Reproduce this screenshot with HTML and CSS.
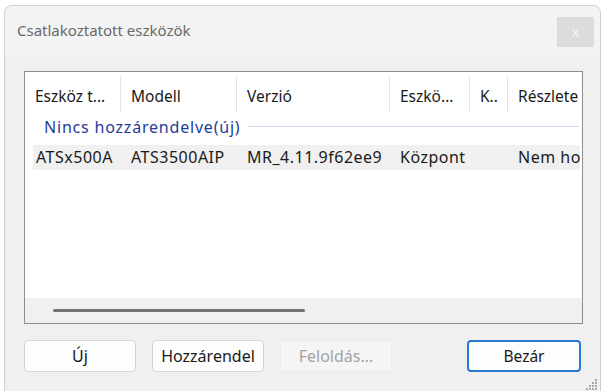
FILE: index.html
```
<!DOCTYPE html>
<html>
<head>
<meta charset="utf-8">
<link rel="stylesheet" href="styles.css">
</head>
<body>
<div class="window">
  <div class="titlebar">
    <div class="title">Csatlakoztatott eszközök</div>
    <div class="close">x</div>
  </div>
  <div class="content">
    <div class="list">
      <div class="header">
        <div class="col c1">Eszköz t...</div>
        <div class="col c2">Modell</div>
        <div class="col c3">Verzió</div>
        <div class="col c4">Eszkö...</div>
        <div class="col c5">K..</div>
        <div class="col c6">Részlete</div>
      </div>
      <div class="group">
        <span class="group-label">Nincs hozzárendelve(új)</span>
        <span class="group-line"></span>
      </div>
      <div class="row">
        <div class="cell c1">ATSx500A</div>
        <div class="cell c2">ATS3500AIP</div>
        <div class="cell c3">MR_4.11.9f62ee9</div>
        <div class="cell c4">Központ</div>
        <div class="cell c5"></div>
        <div class="cell c6">Nem hoz</div>
      </div>
      <div class="spacer"></div>
      <div class="hscroll"><div class="thumb"></div></div>
    </div>
    <div class="buttons">
      <button class="btn">Új</button>
      <button class="btn">Hozzárendel</button>
      <button class="btn disabled">Feloldás...</button>
      <div class="gap"></div>
      <button class="btn primary">Bezár</button>
    </div>
  </div>
  <svg class="grip" width="12" height="12" viewBox="0 0 12 12">
    <rect x="9" y="1" width="2" height="2" fill="#a8a8a8"/>
    <rect x="6" y="4" width="2" height="2" fill="#a8a8a8"/>
    <rect x="9" y="4" width="2" height="2" fill="#a8a8a8"/>
    <rect x="3" y="7" width="2" height="2" fill="#a8a8a8"/>
    <rect x="6" y="7" width="2" height="2" fill="#a8a8a8"/>
    <rect x="9" y="7" width="2" height="2" fill="#a8a8a8"/>
    <rect x="0" y="10" width="2" height="2" fill="#a8a8a8"/>
    <rect x="3" y="10" width="2" height="2" fill="#a8a8a8"/>
    <rect x="6" y="10" width="2" height="2" fill="#a8a8a8"/>
    <rect x="9" y="10" width="2" height="2" fill="#a8a8a8"/>
  </svg>
</div>
</body>
</html>
```
FILE: styles.css
```
html, body {
  margin: 0;
  padding: 0;
  background: #ffffff;
}
body {
  font-family: "Noto Sans", "Open Sans", sans-serif;
  color: #1a1a1a;
}
.window {
  position: relative;
  margin: 5px 4px 0 4px;
  height: 392px;
  box-sizing: border-box;
  border: 1px solid #cfcfcf;
  border-bottom: none;
  border-radius: 8px 8px 0 0;
  background: #f0f0f0;
  overflow: hidden;
}
.titlebar {
  height: 51px;
  display: flex;
  justify-content: space-between;
  align-items: flex-start;
  background: #f3f3f3;
  border-bottom: 1px solid #ececec;
}
.title {
  margin: 13px 0 0 12px;
  font-size: 15px;
  color: #6a6a6a;
  line-height: 22px;
}
.close {
  margin: 11px 6px 0 0;
  width: 37px;
  height: 30px;
  background: #dcdcdc;
  color: #f4f4f4;
  font-size: 15px;
  line-height: 28px;
  text-align: center;
}
.content {
  padding: 13px 0 0 19px;
}
.list {
  width: 559px;
  height: 253px;
  box-sizing: border-box;
  border: 1px solid #8e8e8e;
  background: #ffffff;
  display: flex;
  flex-direction: column;
  overflow: hidden;
}
.header {
  display: flex;
  height: 40px;
  font-size: 15.5px;
}
.col {
  box-sizing: border-box;
  padding: 9px 0 0 10px;
  border-right: 1px solid #e5e5e5;
  margin-top: 4px;
  white-space: nowrap;
  overflow: hidden;
}
.c1 { width: 96px; }
.c2 { width: 116px; }
.c3 { width: 153px; }
.c4 { width: 80px; }
.c5 { width: 38px; }
.c6 { flex: 1; border-right: none; }
.group {
  display: flex;
  align-items: center;
  height: 29px;
  padding-left: 19px;
  padding-right: 3px;
}
.group-label {
  color: #1f3c99;
  font-size: 16px;
  letter-spacing: 0.8px;
  white-space: nowrap;
}
.group-line {
  flex: 1;
  height: 1px;
  background: #cbd8ee;
  margin-left: 8px;
}
.row {
  display: flex;
  height: 25px;
  margin-top: 4px;
  margin-left: 8px;
  margin-right: 2px;
  background: #f0f0f0;
  font-size: 16px;
  letter-spacing: 0.5px;
  line-height: 25px;
}
.cell {
  box-sizing: border-box;
  padding-left: 10px;
  white-space: nowrap;
  overflow: hidden;
}
.row .c1 { width: 88px; padding-left: 3px; }
.spacer { flex: 1; }
.hscroll {
  height: 25px;
  background: #f0f0f0;
}
.thumb {
  margin: 11px 0 0 28px;
  width: 252px;
  height: 3px;
  border-radius: 2px;
  background: #717171;
}
.buttons {
  display: flex;
  margin-top: 16px;
  width: 557px;
  gap: 16px;
}
.btn {
  width: 112px;
  height: 32px;
  border: 1px solid #d3d3d3;
  border-radius: 4px;
  background: #fdfdfd;
  font-family: "Noto Sans", "Open Sans", sans-serif;
  font-size: 16px;
  color: #1a1a1a;
  padding: 0;
}
.btn.disabled {
  background: #f5f5f5;
  border-color: #ececec;
  color: #a3a3a3;
}
.gap { flex: 1; }
.btn.primary {
  border: 2px solid #2a7bd3;
  width: 114px;
  font-size: 15.5px;
}
.grip {
  position: absolute;
  right: 2px;
  bottom: 7px;
}
```
